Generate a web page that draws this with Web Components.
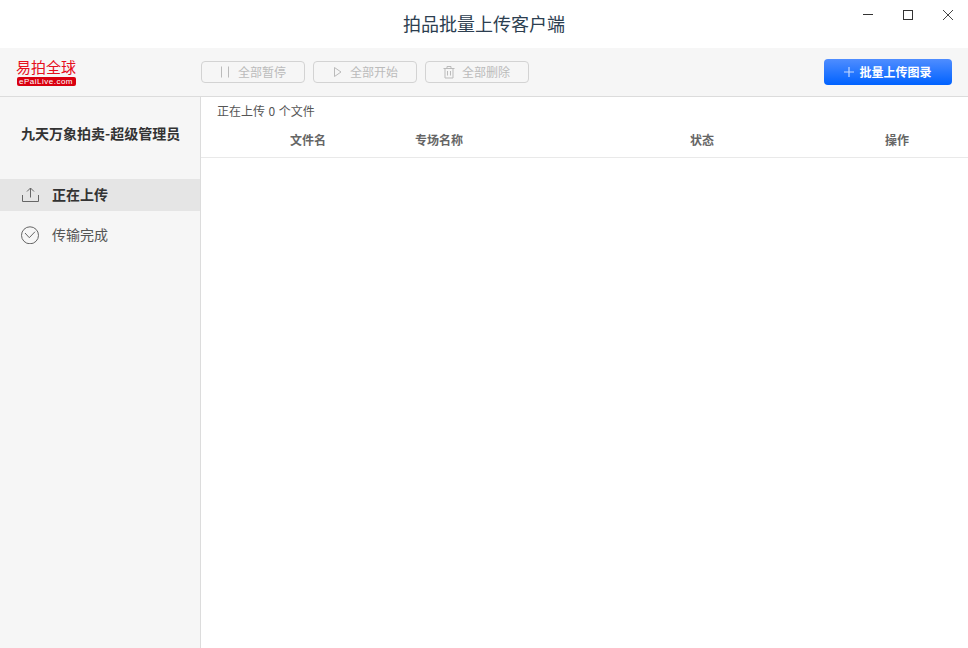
<!DOCTYPE html>
<html lang="zh"><head><meta charset="utf-8">
<style>
html,body{margin:0;height:100%;background:#fff;overflow:hidden}
body{font-family:"Noto Sans CJK SC","Liberation Sans",sans-serif}
</style></head><body>
<upload-app></upload-app>
<script>
function def(name,html){customElements.define(name,class extends HTMLElement{constructor(){super();this.attachShadow({mode:'open'}).innerHTML=html}})}
def('title-bar',`<style>
:host{display:flex;height:48px;align-items:center;justify-content:center;position:relative;background:#fff;color:#2c3e50;font-size:18px;box-sizing:border-box;padding-bottom:2px}
.w{position:absolute;top:0;right:-2px;display:flex}
.w svg{width:40px;height:30px;display:block}
</style><span>拍品批量上传客户端</span>
<div class="w">
<svg viewBox="0 0 40 30"><path d="M13 14.500h10" stroke="#333" fill="none"/></svg>
<svg viewBox="0 0 40 30"><rect x="13.500" y="10.500" width="9" height="9" stroke="#333" fill="none"/></svg>
<svg viewBox="0 0 40 30"><path d="M13 10l10 10M23 10L13 20" stroke="#444" fill="none"/></svg>
</div>`);
def('brand-logo',`<style>
:host{display:flex;flex-direction:column;align-items:center;width:60px;color:#e60f1e;line-height:1}
.a{font-size:15px;line-height:11px;white-space:nowrap}
.b{background:#d9000f;color:#fff;font:400 8px/9px "Liberation Sans",sans-serif;width:59px;height:9px;border-radius:2px;text-align:center;letter-spacing:.5px;margin-top:5px}
</style><div class="a">易拍全球</div><div class="b">ePaiLive.com</div>`);
def('tool-button',`<style>
:host{display:flex;box-sizing:border-box;width:104px;height:22px;border:1px solid #d3d3d3;border-radius:4px;align-items:center;padding:0 0 2px 16px;gap:6px;color:#bbb;font-size:12px}
::slotted(svg){width:14px;height:14px;flex:none;position:relative;top:1px}
</style><slot name="i"></slot><slot></slot>`);
def('primary-button',`<style>
:host{display:flex;box-sizing:border-box;width:128px;height:26px;border-radius:4px;align-items:center;justify-content:center;gap:5px;color:#fff;font-size:12px;font-weight:700;background:linear-gradient(#4f8dff,#0062ff)}
svg{width:12px;height:12px}
span{position:relative;top:-1px;left:-1px}
</style><svg viewBox="0 0 12 12"><path d="M6 1v10M1 6h10" stroke="#c4d9ff" stroke-width="1.200" fill="none"/></svg><span><slot></slot></span>`);
def('tool-bar',`<style>
:host{display:flex;height:49px;box-sizing:border-box;background:#f6f6f6;border-bottom:1px solid #dcdcdc;align-items:center;padding:0 16px}
.l{width:185px;flex:none;padding-top:2px}
.g{display:flex;gap:8px;flex:1}
</style><div class="l"><brand-logo></brand-logo></div>
<div class="g">
<tool-button><svg slot="i" viewBox="0 0 14 14"><path d="M3.500 1.500v11M10.500 1.500v11" stroke="#bbb" fill="none"/></svg>全部暂停</tool-button>
<tool-button><svg slot="i" viewBox="0 0 14 14"><path d="M4.500 2.500l6.500 4.500-6.500 4.500z" stroke="#bbb" fill="none"/></svg>全部开始</tool-button>
<tool-button><svg slot="i" viewBox="0 0 14 14"><path d="M1.500 3.500h11M5 3.500V1.500h4v2M3 3.500V13h8V3.500M5.500 6v4.500M8.500 6v4.500" stroke="#bbb" fill="none"/></svg>全部删除</tool-button>
</div><primary-button>批量上传图录</primary-button>`);
def('nav-item',`<style>
:host{display:flex;height:32px;align-items:center;padding-left:21px;gap:13px;font-size:14px;color:#555}
:host([active]){background:#e5e5e5;color:#333;font-weight:700}
span{position:relative;top:-1px}
::slotted(svg){width:18px;height:18px;flex:none}
</style><slot name="i"></slot><span><slot></slot></span>`);
def('side-bar',`<style>
:host{display:block;width:201px;box-sizing:border-box;background:#f6f6f6;border-right:1px solid #dcdcdc;flex:none}
.u{font-size:14px;font-weight:700;color:#333;padding:26px 0 0 21px;line-height:20px;margin-bottom:36px;white-space:nowrap}
nav{display:flex;flex-direction:column;gap:8px}
</style><div class="u">九天万象拍卖-超级管理员</div>
<nav>
<nav-item active><svg slot="i" viewBox="0 0 18 18"><path d="M1.500 9v6.500h16V9M9.500 11.500V2M6 5.500L9.500 2 13 5.500" stroke="#666" fill="none"/></svg>正在上传</nav-item>
<nav-item><svg slot="i" viewBox="0 0 18 18"><circle cx="9" cy="9.300" r="8.500" stroke="#666" fill="none"/><path d="M4 7l4.300 4.700L14 5.700" stroke="#666" fill="none"/></svg>传输完成</nav-item>
</nav>`);
def('file-table',`<style>
:host{display:block;flex:1;min-width:0;background:#fff}
.c{font-size:12px;color:#555;padding-left:16px;height:28px;line-height:27px;word-spacing:.9px}
.h{display:grid;grid-template-columns:214px 163px 248px 142px;height:33px;box-sizing:border-box;border-bottom:1px solid #e9e9e9;font-size:12px;font-weight:700;color:#666;line-height:30px}
.h span{text-align:center}
.h span:nth-child(2){text-align:left}
</style><div class="c">正在上传 0 个文件</div>
<div class="h"><span>文件名</span><span>专场名称</span><span>状态</span><span>操作</span></div>`);
def('upload-app',`<style>
:host{display:flex;flex-direction:column;height:648px}
.m{display:flex;flex:1;min-height:0}
</style><title-bar></title-bar><tool-bar></tool-bar>
<div class="m"><side-bar></side-bar><file-table></file-table></div>`);
</script>
</body></html>
